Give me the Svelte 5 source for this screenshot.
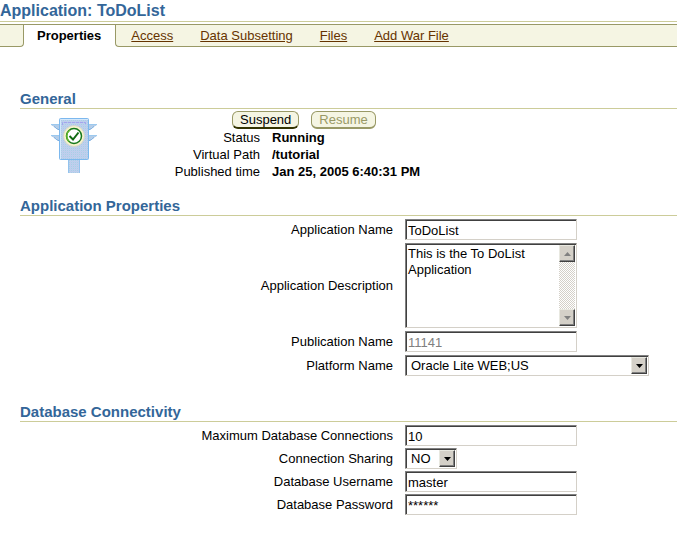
<script>
  let tabs = ['Access', 'Data Subsetting', 'Files', 'Add War File'];

  let details = [
    { label: 'Status', value: 'Running' },
    { label: 'Virtual Path', value: '/tutorial' },
    { label: 'Published time', value: 'Jan 25, 2005 6:40:31 PM' }
  ];

  let appName = $state('ToDoList');
  let description = $state('This is the To DoList Application');
  let publication = '11141';
  let platform = $state('Oracle Lite WEB;US');
  let maxConnections = $state('10');
  let sharing = $state('NO');
  let username = $state('master');
  let password = $state('******');
</script>

<div class="page">
  <h1>Application: ToDoList</h1>

  <nav class="tabs">
    <span class="lead"></span>
    <span class="active">Properties</span>
    <div class="links">
      {#each tabs as tab}
        <a href="#{tab}">{tab}</a>
      {/each}
    </div>
  </nav>

  <main>
    <section class="general">
      <h2>General</h2>
      <div class="general-body">
        <svg class="light" width="46" height="56" viewBox="0 0 46 56">
          <defs>
            <pattern id="dither" width="2" height="2" patternUnits="userSpaceOnUse">
              <rect width="2" height="2" fill="#bcd3ee" />
              <rect width="1" height="1" fill="#accbe6" />
              <rect x="1" y="1" width="1" height="1" fill="#c2c9ec" />
            </pattern>
          </defs>
          <path d="M0 6h8v5H6L5 9H3L2 8H1zM0 17h8v5H6L5 20H3L2 19H1zM46 6h-8v5h2l1-2h2l1-1h1zM46 17h-8v5h2l1-2h2l1-1h1z" fill="#b4cde8" />
          <path d="M0 6.500h8M0 17.500h8M38 6.500h8M38 17.500h8" stroke="#9cc9ef" />
          <path d="M3 8.500l4 3h1M3 19.500l4 3h1M43 8.500l-4 3h-1M43 19.500l-4 3h-1" fill="none" stroke="#78ace0" />
          <rect x="17" y="42" width="12" height="13" fill="url(#dither)" />
          <path d="M17.500 42v13M28.500 42v13" stroke="#94c3ee" />
          <rect x="8.500" y="0.500" width="29" height="41" rx="1" fill="url(#dither)" stroke="#7cb8ee" />
          <path d="M9.500 41V1.500H37" fill="none" stroke="#d4e8fb" />
          <path d="M11.500 7V4.500h23V7" fill="none" stroke="#a3a4ee" stroke-dasharray="3 1" />
          <circle cx="23" cy="18" r="10.500" fill="#f6f3cc" stroke="#d4d6cc" />
          <circle cx="23" cy="18" r="7.500" fill="#fff" stroke="#16781b" stroke-width="1.500" />
          <path d="M18 23.500a7.500 7.500 0 0 1 1-11.500" fill="none" stroke="#63b82c" stroke-width="1.500" />
          <path d="M18.500 18l3.500 3.500 5.500-7" fill="none" stroke="#116a12" stroke-width="2" />
        </svg>
        <div class="status">
          <div class="buttons">
            <button>Suspend</button>
            <button disabled>Resume</button>
          </div>
          <dl>
            {#each details as item}
              <dt>{item.label}</dt>
              <dd>{item.value}</dd>
            {/each}
          </dl>
        </div>
      </div>
    </section>

    <section class="properties">
      <h2>Application Properties</h2>
      <div class="form">
        <label for="name">Application Name</label>
        <input id="name" bind:value={appName} />

        <label for="description">Application Description</label>
        <div class="area">
          <textarea id="description" bind:value={description}></textarea>
          <div class="scrollbar">
            <span class="cap"><svg width="7" height="4"><path d="M0 4h7L3.500 0z" fill="#808080" /></svg></span>
            <span class="cap"><svg width="7" height="4"><path d="M0 0h7L3.500 4z" fill="#808080" /></svg></span>
          </div>
        </div>

        <label for="publication">Publication Name</label>
        <input id="publication" value={publication} disabled />

        <label for="platform">Platform Name</label>
        <div class="pick wide">
          <select id="platform" bind:value={platform}>
            <option>Oracle Lite WEB;US</option>
          </select>
          <span class="cap"><svg width="7" height="4"><path d="M0 0h7L3.500 4z" /></svg></span>
        </div>
      </div>
    </section>

    <section class="database">
      <h2>Database Connectivity</h2>
      <div class="form">
        <label for="max">Maximum Database Connections</label>
        <input id="max" bind:value={maxConnections} />

        <label for="sharing">Connection Sharing</label>
        <div class="pick">
          <select id="sharing" bind:value={sharing}>
            <option>NO</option>
            <option>YES</option>
          </select>
          <span class="cap"><svg width="7" height="4"><path d="M0 0h7L3.500 4z" /></svg></span>
        </div>

        <label for="username">Database Username</label>
        <input id="username" bind:value={username} />

        <label for="password">Database Password</label>
        <input id="password" bind:value={password} autocomplete="off" />
      </div>
    </section>
  </main>
</div>

<style>
  :global(body) {
    background: #fff;
  }

  .page {
    font: 13px/17px "Liberation Sans", Arial, sans-serif;
    color: #000;
  }

  h1,
  h2 {
    margin: 0;
    color: #336699;
    border-bottom: 1px solid #cccc99;
  }

  h1 {
    padding-top: 1px;
    font-size: 16px;
    line-height: 20px;
  }

  h2 {
    font-size: 15px;
    line-height: 18px;
  }

  /* tab bar */
  .tabs {
    display: flex;
    height: 22px;
    margin-top: 2px;
    line-height: 21px;
    border-top: 1px solid #999966;
  }

  .lead,
  .links {
    box-sizing: border-box;
    background: #f5f5e3;
    border-bottom: 1px solid #999966;
  }

  .lead {
    width: 24px;
    border-right: 1px solid #999966;
    border-bottom-right-radius: 4px;
  }

  .active {
    padding: 0 14px 0 13px;
    font-weight: bold;
  }

  .links {
    display: flex;
    flex: 1;
    gap: 27px;
    padding-left: 15px;
    border-left: 1px solid #999966;
    border-bottom-left-radius: 4px;
  }

  a {
    color: #663300;
  }

  main {
    padding: 43px 0 0 20px;
  }

  /* general */
  .general-body {
    display: flex;
    padding: 2px 0 0 31px;
  }

  .light {
    margin-top: 7px;
  }

  .status {
    margin-left: 77px;
  }

  .buttons {
    display: flex;
    gap: 12px;
    padding-left: 58px;
  }

  button {
    height: 18px;
    padding: 0 7px;
    font: inherit;
    line-height: 15px;
    color: #000;
    background: #f5f5e3;
    border: 1px solid #999966;
    border-bottom: 2px solid #333300;
    border-radius: 6px;
  }

  button:disabled {
    color: #999966;
    border-bottom-color: #999966;
  }

  dl {
    display: grid;
    grid-template-columns: 86px auto;
    column-gap: 12px;
    margin: 0;
  }

  dt {
    text-align: right;
  }

  dd {
    margin: 0;
    font-weight: bold;
  }

  /* forms */
  .properties {
    margin-top: 17px;
  }

  .database {
    margin-top: 27px;
  }

  .form {
    display: grid;
    grid-template-columns: 373px 1fr;
    gap: 2px 12px;
    align-items: center;
    justify-items: start;
    padding-top: 3px;
  }

  .properties .form {
    row-gap: 3px;
  }

  label {
    justify-self: end;
  }

  input,
  .area,
  .pick {
    box-sizing: border-box;
    background: #fff;
    border: 1px solid;
    border-color: #808080 #d4d0c8 #d4d0c8 #808080;
    box-shadow: inset 1px 1px #404040;
  }

  input {
    width: 172px;
    height: 21px;
    padding: 1px 2px 0;
    font: inherit;
    color: #000;
  }

  input:disabled {
    color: #808080;
  }

  .area {
    display: flex;
    width: 172px;
    height: 85px;
    padding: 1px;
  }

  textarea {
    flex: 1;
    min-width: 0;
    padding: 1px;
    font: inherit;
    line-height: 16px;
    border: 0;
    outline: 0;
    resize: none;
    overflow: hidden;
  }

  .scrollbar {
    display: flex;
    flex-direction: column;
    justify-content: space-between;
    background: repeating-conic-gradient(#fff 0 25%, #d4d0c8 0 50%) 0 0 / 2px 2px;
  }

  .cap {
    display: flex;
    align-items: center;
    justify-content: center;
    box-sizing: border-box;
    width: 16px;
    height: 17px;
    background: #d4d0c8;
    border: 1px solid;
    border-color: #e8e8e0 #404040 #404040 #e8e8e0;
    box-shadow: inset -1px -1px #808080;
    pointer-events: none;
  }

  .pick {
    display: grid;
    grid-template-columns: 1fr 16px;
    width: 52px;
    height: 21px;
    padding: 1px;
  }

  .pick.wide {
    width: 244px;
  }

  select {
    grid-area: 1 / 1 / 2 / 3;
    width: 100%;
    height: 17px;
    padding: 0 0 0 4px;
    font: inherit;
    color: #000;
    background: #fff;
    border: 0;
    outline: 0;
    appearance: none;
  }

  .pick .cap {
    grid-area: 1 / 2;
  }
</style>
